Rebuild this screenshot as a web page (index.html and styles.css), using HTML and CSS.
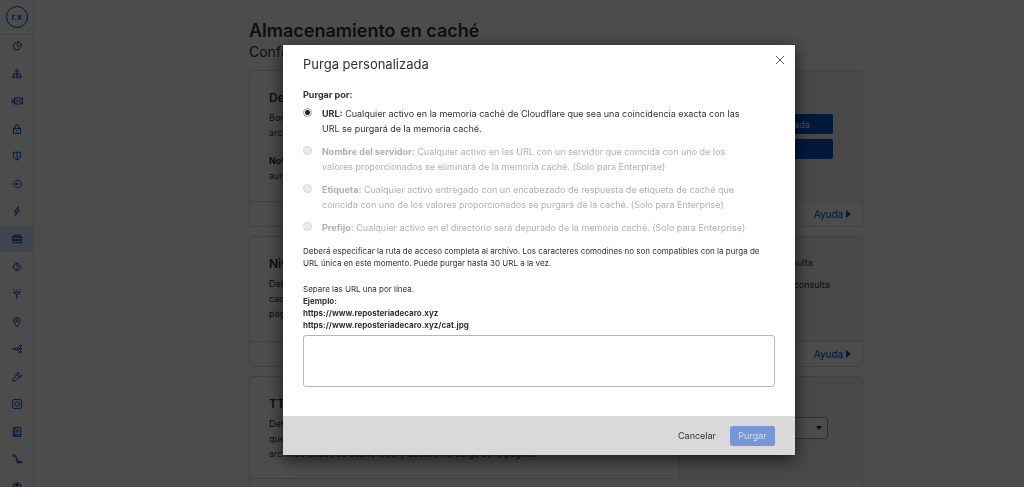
FILE: index.html
```html
<!DOCTYPE html>
<html lang="es">
<head>
  <meta charset="UTF-8" />
  <meta name="viewport" content="width=device-width, initial-scale=1.0"/>
  <title>Almacenamiento en caché</title>
  <link rel="stylesheet" href="styles.css">
</head>
<body>

  <div class="page">
    <aside class="sidebar">
      <div class="site"><a href="#" class="site-badge">r.x</a></div>
      <nav class="side-nav">
        <a href="#" aria-label="Análisis"><svg viewBox="0 0 16 16"><path d="M6.500 2.500A6 6 0 1 0 13.500 10M8.500 1.500V8H15A6.500 6.500 0 0 0 8.500 1.500z"/></svg></a>
        <a href="#" aria-label="DNS"><svg viewBox="0 0 16 16"><circle cx="8" cy="3" r="2"/><path d="M8 5v6M2.500 11V8h11v3"/><circle cx="2.500" cy="13" r="1.600"/><circle cx="8" cy="13" r="1.600"/><circle cx="13.500" cy="13" r="1.600"/></svg></a>
        <a href="#" aria-label="Correo electrónico"><svg class="wide" viewBox="0 0 20 16"><path d="M6 3h13v10H6zM6 3l6.500 5.500L19 3M6 13l4.500-5M19 13l-4.500-5M1 6h5M0 8.500h5M2 11h4"/></svg></a>
        <a href="#" aria-label="SSL/TLS"><svg viewBox="0 0 16 16"><rect x="2.500" y="7" width="11" height="8"/><path d="M5 7V4a3 3 0 0 1 6 0v3M8 10v2.500"/></svg></a>
        <a href="#" aria-label="Seguridad"><svg viewBox="0 0 16 16"><path d="M2.500 2h11v6c0 3-2.500 5-5.500 6.500C5 13 2.500 11 2.500 8zM8 2v12.500"/></svg></a>
        <a href="#" aria-label="Acceso"><svg viewBox="0 0 16 16"><path d="M4 4.500a6 6 0 1 1 0 7M0 8h10M7.500 5.500L10 8l-2.500 2.500"/></svg></a>
        <a href="#" aria-label="Velocidad"><svg viewBox="0 0 16 16"><path d="M10 1L3.500 9H7l-1.500 6L12.500 6.500H8.500z"/></svg></a>
        <a href="#" class="active" aria-label="Almacenamiento en caché"><svg viewBox="0 0 16 16"><path d="M1 5l2-3h10l2 3zM1 5h14v4H1zM1 10.500h14V14H1z"/></svg></a>
        <a href="#" aria-label="Rutas de Workers"><svg viewBox="0 0 16 16"><path d="M6 2L1.500 8 6 14M6 2h3.500l5 6-5 6H6M6.500 3l4 5-4 5"/></svg></a>
        <a href="#" aria-label="Reglas"><svg viewBox="0 0 16 16"><path d="M2 1.500h2M7 1.500h2M12 1.500h2M2.500 5h11L9.500 9h-3zM8 9v7"/></svg></a>
        <a href="#" aria-label="Red"><svg viewBox="0 0 16 16"><path d="M8 15.500C5 11.500 3 9 3 6a5 5 0 0 1 10 0c0 3-2 5.500-5 9.500z"/><circle cx="8" cy="6" r="1.700"/></svg></a>
        <a href="#" aria-label="Tráfico"><svg viewBox="0 0 16 16"><path d="M0 8h5M8.500 7L12 4M8.500 9l3.500 3M9 8h4"/><circle cx="7" cy="8" r="2"/><circle cx="13.500" cy="3" r="1.500"/><circle cx="14" cy="8" r="1.300"/><circle cx="13.500" cy="13" r="1.500"/></svg></a>
        <a href="#" aria-label="Páginas personalizadas"><svg viewBox="0 0 16 16"><path d="M14.500 4.500L12 7 9.500 6.500 9 4l2.500-2.500a4 4 0 0 0-5 5.200L1.500 11.500v3h3l5-5a4 4 0 0 0 5-5z"/></svg></a>
        <a href="#" aria-label="Aplicaciones"><svg viewBox="0 0 16 16"><rect x="1" y="1" width="14" height="14" rx="2"/><circle cx="8" cy="8" r="3.500"/></svg></a>
        <a href="#" aria-label="Scrape Shield"><svg viewBox="0 0 16 16"><path d="M2 1h12v14H2zM4.500 1v14M6.500 5h5M6.500 8h5M2 12.500h12"/></svg></a>
        <a href="#" aria-label="Zaraz"><svg viewBox="0 0 16 16"><path d="M0 2h6M1 4.500h6v5M6 9.500h5M7 12h9M7 14h9"/></svg></a>
        <a href="#" aria-label="Web3"><svg viewBox="0 0 16 16"><circle cx="8" cy="8" r="6.500"/><path d="M8 1.500v13M2 6l6-2 6 2M8 4l-4 8M8 4l4 8"/></svg></a>
      </nav>
    </aside>

    <main class="content">
      <h1>Almacenamiento en caché</h1>
      <p class="subtitle">Configuración</p>

      <section class="card">
        <div class="card-body card-purge">
          <div class="card-text">
            <h2>Depurar caché</h2>
            <p>Borre los archivos almacenados en caché<br>archivos actualizados</p>
            <p class="note"><b>Nota:</b><br>aumentar la carga</p>
          </div>
          <div class="card-side">
            <button class="primary">Purga personalizada</button>
            <button class="primary">Purgar todo</button>
          </div>
        </div>
        <div class="card-footer"><a href="#">Ayuda <i class="arrow"></i></a></div>
      </section>

      <section class="card">
        <div class="card-body card-level">
          <div class="card-text">
            <h2>Nivel de caché</h2>
            <p>Determine la cantidad de contenido<br>caché de Cloudflare<br>página web</p>
          </div>
          <div class="card-side card-choices">
            <span>Sin cadena de consulta</span>
            <span>Ignorar cadena de consulta</span>
          </div>
        </div>
        <div class="card-footer"><a href="#">Ayuda <i class="arrow"></i></a></div>
      </section>

      <section class="card">
        <div class="card-body card-ttl">
          <div class="card-text">
            <h2>TTL de caché</h2>
            <p>Determine el tiempo durante el<br>que los archivos se guardan<br>archivos desde su caché local y acelerar la carga de la página.</p>
          </div>
          <div class="card-side card-select">
            <select aria-label="TTL de caché"><option>4 horas</option></select>
            <i class="caret"></i>
          </div>
        </div>
        <div class="card-footer"></div>
      </section>
    </main>
  </div>

  <div class="overlay">
    <form class="modal" role="dialog" aria-labelledby="modalTitle">
      <div class="modal-body">
        <div class="modal-header">
          <h2 id="modalTitle">Purga personalizada</h2>
          <button type="button" class="close" aria-label="Cerrar"><svg viewBox="0 0 10 10"><path d="M1 1l8 8M9 1L1 9"/></svg></button>
        </div>

        <fieldset>
          <legend>Purgar por:</legend>
          <div class="option">
            <input type="radio" name="purge" id="byUrl" checked />
            <label for="byUrl"><b>URL:</b> Cualquier activo en la memoria caché de Cloudflare que sea una coincidencia exacta con las URL se purgará de la memoria caché.</label>
          </div>
          <div class="option">
            <input type="radio" name="purge" id="byHost" disabled />
            <label for="byHost"><b>Nombre del servidor:</b> Cualquier activo en las URL con un servidor que coincida con uno de los valores proporcionados se eliminará de la memoria caché. (Solo para Enterprise)</label>
          </div>
          <div class="option">
            <input type="radio" name="purge" id="byTag" disabled />
            <label for="byTag"><b>Etiqueta:</b> Cualquier activo entregado con un encabezado de respuesta de etiqueta de caché que coincida con uno de los valores proporcionados se purgará de la caché. (Solo para Enterprise)</label>
          </div>
          <div class="option">
            <input type="radio" name="purge" id="byPrefix" disabled />
            <label for="byPrefix"><b>Prefijo:</b> Cualquier activo en el directorio será depurado de la memoria caché. (Solo para Enterprise)</label>
          </div>
        </fieldset>

        <p class="hint">Deberá especificar la ruta de acceso completa al archivo. Los caracteres comodines no son compatibles con la purga de URL única en este momento. Puede purgar hasta 30 URL a la vez.</p>
        <label class="hint" for="urls">Separe las URL una por línea.<br>
          <b>Ejemplo:<br>
          https://www.reposteriadecaro.xyz<br>
          https://www.reposteriadecaro.xyz/cat.jpg</b></label>
        <textarea id="urls"></textarea>
      </div>
      <div class="modal-footer">
        <button type="button" class="cancel">Cancelar</button>
        <button type="submit" class="submit" disabled>Purgar</button>
      </div>
    </form>
  </div>

</body>
</html>
```
FILE: styles.css
```css
* {
  margin: 0;
  padding: 0;
  box-sizing: border-box;
}

body {
  font-family: Inter, "Liberation Sans", sans-serif;
  font-size: 9px;
  color: #313131;
  background-color: #fff;
  height: 100vh;
  overflow: hidden;
}

button,
select,
textarea {
  font-family: inherit;
  font-size: inherit;
}

a {
  color: #0051c3;
  text-decoration: none;
}

.page {
  display: flex;
  height: 100vh;
  overflow: hidden;
}

/* Sidebar */
.sidebar {
  display: flex;
  flex-direction: column;
  flex: none;
  width: 34px;
  height: 100vh;
  border-right: 1px solid #e4e4e4;
}

.site {
  display: flex;
  justify-content: center;
  align-items: center;
  flex: none;
  height: 35px;
  border-bottom: 1px solid #d9d9d9;
}

.site-badge {
  width: 22px;
  height: 22px;
  line-height: 20px;
  border: 1px solid #0051c3;
  border-radius: 50%;
  text-align: center;
  font-size: 8px;
  font-weight: bold;
}

.side-nav {
  display: flex;
  flex-direction: column;
  justify-content: space-between;
  flex: 1;
  margin-top: -2px;
  margin-bottom: -13px;
}

.side-nav a {
  display: flex;
  justify-content: center;
  align-items: center;
  height: 26px;
}

.side-nav a.active {
  background-color: #dbe7fb;
}

.side-nav svg {
  width: 10px;
  height: 10px;
  fill: none;
  stroke: #0051c3;
  stroke-width: 1.6;
}

.side-nav svg.wide {
  width: 12px;
}

/* Page behind the modal */
.content {
  flex: 1;
  padding: 20px 161px 0 215px;
}

.content h1 {
  font-size: 18px;
  line-height: 22px;
  font-weight: 600;
}

.subtitle {
  font-size: 14px;
  line-height: 20px;
  margin-bottom: 8px;
}

.card {
  border: 1px solid #d9d9d9;
  border-radius: 3px;
  margin-bottom: 9px;
}

.card-body {
  display: grid;
  grid-template-columns: 7fr 3fr;
}

.card-purge {
  height: 130px;
}

.card-level {
  height: 104px;
}

.card-ttl {
  height: 101px;
}

.card-text {
  padding: 19px;
  white-space: nowrap;
}

.card-text h2 {
  font-size: 12px;
  line-height: 16px;
  font-weight: 600;
  margin-bottom: 4px;
}

.card-text p {
  line-height: 15px;
}

.card-text .note {
  margin-top: 13px;
}

.card-side {
  display: flex;
  flex-direction: column;
  gap: 5px;
  padding: 43px 29px 0 20px;
  background-color: #f2f2f2;
  border-left: 1px solid #d9d9d9;
}

.card-choices {
  gap: 10px;
  padding: 20px 29px 0 34px;
  line-height: 12px;
  white-space: nowrap;
}

.card-select {
  display: grid;
  grid-template-rows: 22px;
  padding: 40px 34px 0 20px;
}

.primary {
  height: 20px;
  border: none;
  border-radius: 2px;
  background-color: #0051c3;
  color: #fff;
}

.card-select select,
.caret {
  grid-area: 1 / 1;
}

.card-select select {
  appearance: none;
  padding: 0 8px;
  border: 1px solid #999;
  border-radius: 3px;
  background-color: #fff;
}

.caret {
  justify-self: end;
  align-self: center;
  margin-right: 6px;
  border-top: 4px solid #313131;
  border-left: 3px solid transparent;
  border-right: 3px solid transparent;
  pointer-events: none;
}

.card-footer {
  display: flex;
  justify-content: flex-end;
  align-items: center;
  height: 25px;
  padding: 0 11px;
  border-top: 1px solid #d9d9d9;
  font-size: 10px;
}

.arrow {
  display: inline-block;
  border-left: 5px solid #0051c3;
  border-top: 4px solid transparent;
  border-bottom: 4px solid transparent;
}

/* Modal */
.overlay {
  position: fixed;
  inset: 0;
  display: flex;
  justify-content: center;
  align-items: flex-start;
  padding: 45px 0 0 54px;
  background-color: rgba(0, 0, 0, 0.7);
}

.modal {
  width: 100%;
  max-width: 512px;
  background-color: #fff;
  box-shadow: 0 4px 16px rgba(0, 0, 0, 0.7);
}

.modal-body {
  padding: 9px 20px 29px;
}

.modal-header {
  display: flex;
  justify-content: space-between;
  margin-bottom: 14px;
}

.modal-header h2 {
  font-size: 13px;
  line-height: 20px;
  font-weight: normal;
}

.close {
  display: flex;
  justify-content: center;
  align-items: center;
  width: 12px;
  height: 12px;
  margin-right: -11px;
  border: none;
  background: none;
}

.close svg {
  width: 10px;
  height: 10px;
  fill: none;
  stroke: #555;
}

fieldset {
  display: flex;
  flex-direction: column;
  gap: 8px;
  border: none;
  margin-bottom: 10px;
}

legend {
  font-weight: bold;
  line-height: 13px;
  margin-bottom: 5px;
}

.option {
  display: flex;
  gap: 10px;
  padding-right: 20px;
  line-height: 15px;
}

.option input {
  appearance: none;
  flex: none;
  width: 9px;
  height: 9px;
  margin-top: 2px;
  border: 1px solid #999;
  border-radius: 50%;
}

.option input:checked {
  background: radial-gradient(circle, #222 2px, #fff 3px);
}

.option input:disabled {
  background-color: #ebebeb;
  border-color: #d5d5d5;
}

.option input:disabled + label {
  color: #b0b0b0;
}

b {
  font-weight: bold;
}

.hint {
  display: block;
  font-size: 8px;
  line-height: 12px;
  margin-bottom: 14px;
}

textarea {
  display: block;
  width: 100%;
  height: 52px;
  border: 1px solid #b6b6b6;
  border-radius: 3px;
  resize: none;
}

label.hint {
  margin-bottom: 4px;
}

.modal-footer {
  display: flex;
  justify-content: flex-end;
  align-items: center;
  gap: 14px;
  height: 39px;
  padding: 0 20px;
  background-color: #d9d9d9;
}

.cancel {
  border: none;
  background: none;
  color: #313131;
}

.submit {
  width: 45px;
  height: 20px;
  border: none;
  border-radius: 3px;
  background-color: #7696d5;
  color: #d5dff2;
}
```
